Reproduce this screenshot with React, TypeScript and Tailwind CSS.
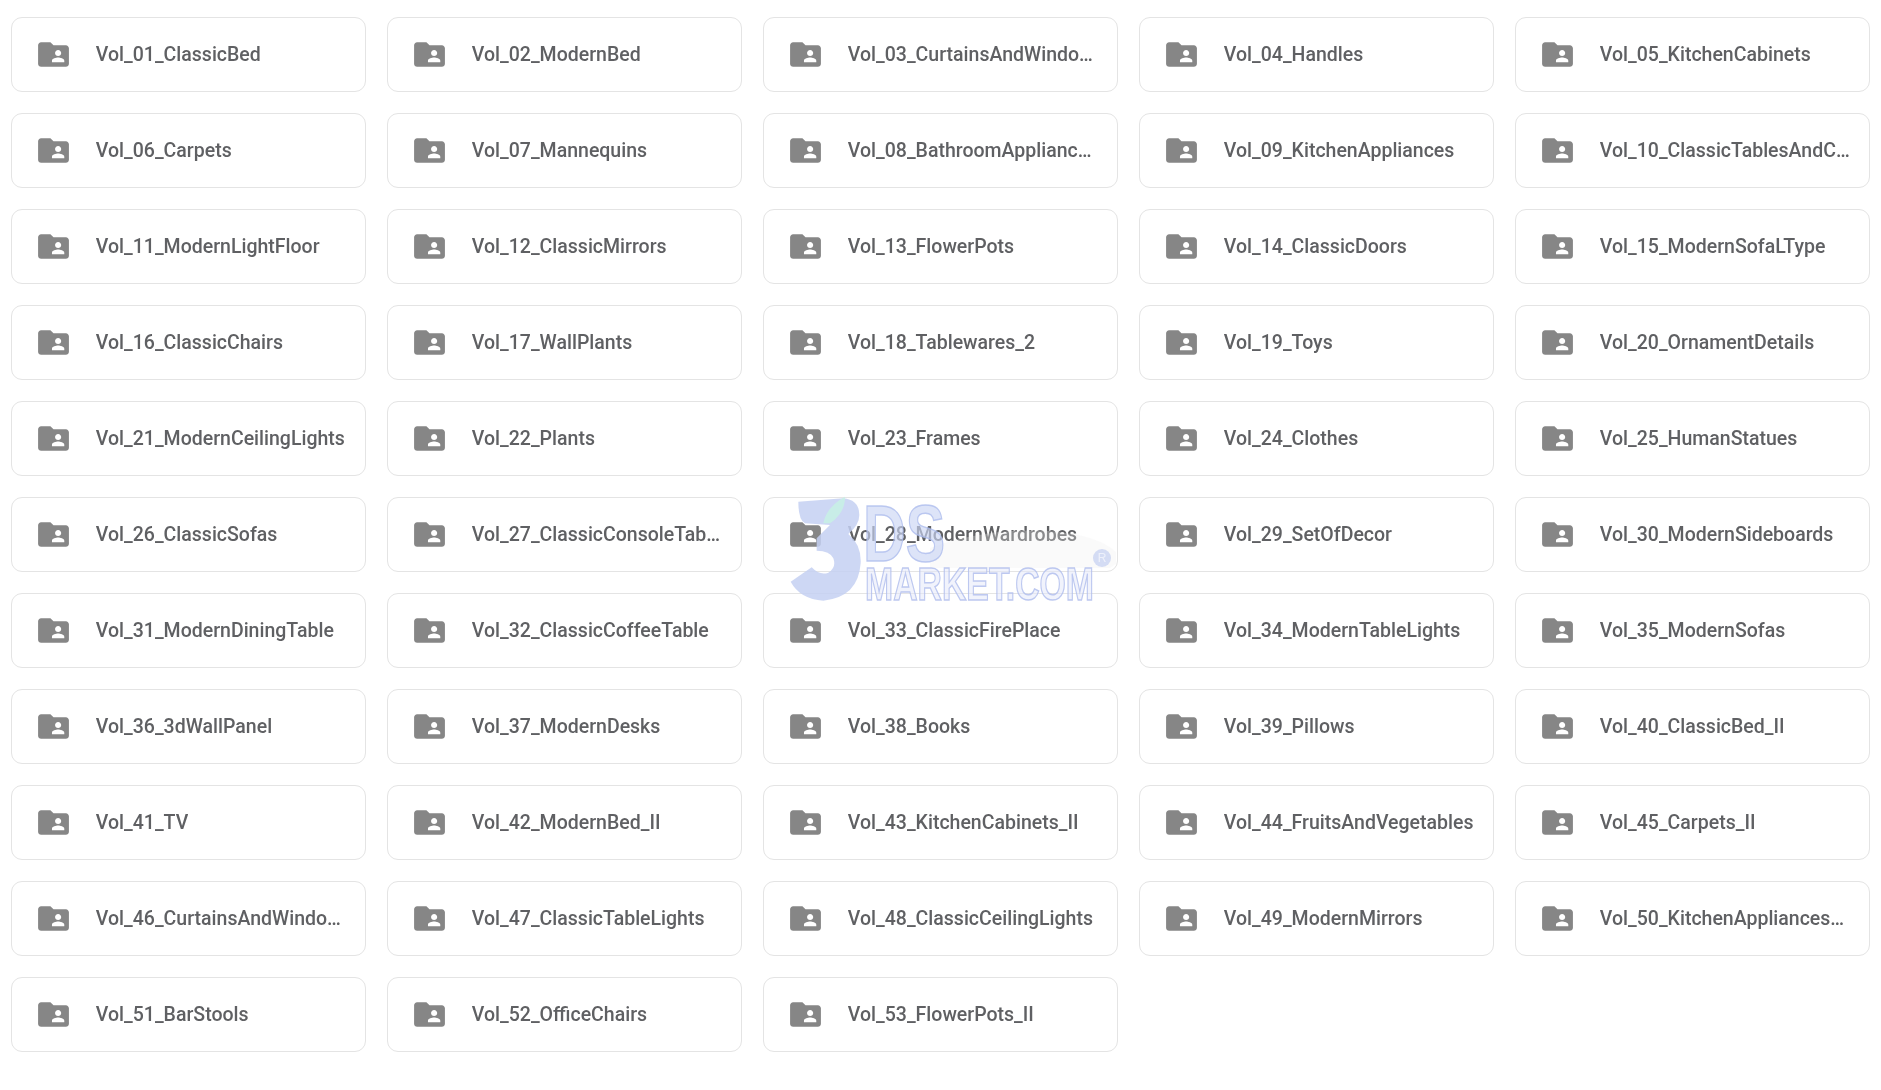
const names = ["Vol_01_ClassicBed","Vol_02_ModernBed","Vol_03_CurtainsAndWindowsTreatment","Vol_04_Handles","Vol_05_KitchenCabinets","Vol_06_Carpets","Vol_07_Mannequins","Vol_08_BathroomAppliancesAndFixtures","Vol_09_KitchenAppliances","Vol_10_ClassicTablesAndChairs","Vol_11_ModernLightFloor","Vol_12_ClassicMirrors","Vol_13_FlowerPots","Vol_14_ClassicDoors","Vol_15_ModernSofaLType","Vol_16_ClassicChairs","Vol_17_WallPlants","Vol_18_Tablewares_2","Vol_19_Toys","Vol_20_OrnamentDetails","Vol_21_ModernCeilingLights","Vol_22_Plants","Vol_23_Frames","Vol_24_Clothes","Vol_25_HumanStatues","Vol_26_ClassicSofas","Vol_27_ClassicConsoleTables","Vol_28_ModernWardrobes","Vol_29_SetOfDecor","Vol_30_ModernSideboards","Vol_31_ModernDiningTable","Vol_32_ClassicCoffeeTable","Vol_33_ClassicFirePlace","Vol_34_ModernTableLights","Vol_35_ModernSofas","Vol_36_3dWallPanel","Vol_37_ModernDesks","Vol_38_Books","Vol_39_Pillows","Vol_40_ClassicBed_II","Vol_41_TV","Vol_42_ModernBed_II","Vol_43_KitchenCabinets_II","Vol_44_FruitsAndVegetables","Vol_45_Carpets_II","Vol_46_CurtainsAndWindowsTreatment","Vol_47_ClassicTableLights","Vol_48_ClassicCeilingLights","Vol_49_ModernMirrors","Vol_50_KitchenAppliancesAndTools","Vol_51_BarStools","Vol_52_OfficeChairs","Vol_53_FlowerPots_II"];

function FolderShared() {
  return (
    <svg viewBox="0 0 24 24" className="w-[37px] h-[37px] shrink-0 fill-[#868686]">
      <path d="M20 6h-8l-2-2H4c-1.1 0-1.99.9-1.99 2L2 18c0 1.1.9 2 2 2h16c1.1 0 2-.9 2-2V8c0-1.1-.9-2-2-2zm-5 3c1.1 0 2 .9 2 2s-.9 2-2 2-2-.9-2-2 .9-2 2-2zm4 8h-8v-1c0-1.33 2.67-2 4-2s4 .67 4 2v1z" />
    </svg>
  );
}

function Watermark() {
  return (
    <svg viewBox="0 0 340 120" className="absolute left-[780px] top-[490px] w-[340px] h-[120px] pointer-events-none">
      <path d="M150 58 C220 32 310 36 336 62 L336 74 L330 78 L150 78 Z" fill="#eeeeee" fillOpacity="0.3" />
      <g transform="scale(0.3333)">
        <path d="M55,35 L190,25 Q238,30 238,75 Q238,105 205,132 Q245,165 242,220 Q235,322 130,332 Q60,327 32,275 L95,232 Q120,258 145,248 Q170,233 160,205 Q150,182 110,182 L110,145 L150,105 L75,100 Q55,90 55,35Z" fill="#c4d0f2" fillOpacity="0.85" />
        <path d="M130,100 Q140,50 195,20 Q195,70 150,100Z" fill="#c8f0e6" fillOpacity="0.9" />
      </g>
      <text x="83" y="71" fontFamily="'Liberation Sans', sans-serif" fontWeight="700" fontSize="80" textLength="82" lengthAdjust="spacingAndGlyphs" fill="#cbd6f5" fillOpacity="0.65" stroke="#a9b9ec" strokeWidth="1.5" strokeOpacity="0.75">DS</text>
      <text x="85" y="110" fontFamily="'Liberation Sans', sans-serif" fontWeight="700" fontSize="46" textLength="229" lengthAdjust="spacingAndGlyphs" fill="#e3e8f9" fillOpacity="0.5" stroke="#aebcec" strokeWidth="1.5" strokeOpacity="0.8">MARKET.COM</text>
      <circle cx="322" cy="68" r="9" fill="#cdd6f2" fillOpacity="0.85" />
      <text x="322" y="72" textAnchor="middle" fontFamily="'Liberation Sans', sans-serif" fontSize="12" fill="#eef1fb">R</text>
    </svg>
  );
}

export default function App() {
  return (
    <div className="relative w-[1881px] h-[1090px] bg-white overflow-hidden font-['Roboto',sans-serif] blur-[0.6px]">
      <div className="grid grid-cols-[repeat(5,355px)] gap-x-[21px] gap-y-[21px] pl-[10.8px] pt-[17px]">
        {names.map((n) => (
          <div key={n} className="flex items-center gap-[23.5px] h-[75px] min-w-0 pl-[23.5px] pr-[16px] rounded-[11px] border-[1.5px] border-[#e4e4e4] bg-white">
            <FolderShared />
            <span className="truncate text-[19.5px] font-medium text-[#5f6063] pt-px">{n}</span>
          </div>
        ))}
      </div>
      <Watermark />
    </div>
  );
}
